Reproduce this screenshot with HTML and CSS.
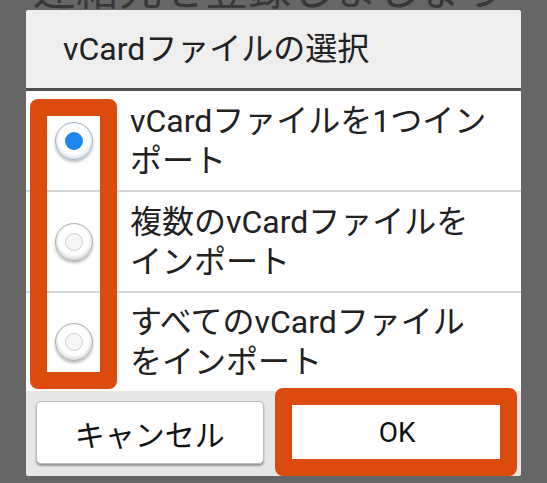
FILE: index.html
```html
<!DOCTYPE html>
<html lang="ja">
<head>
<meta charset="utf-8">
<title>vCardファイルの選択</title>
<link rel="stylesheet" href="styles.css">
</head>
<body>
<div class="screen">
  <div class="behind">連絡先を登録しましょう</div>
  <div class="dialog">
    <div class="title">vCardファイルの選択</div>
    <div class="list">
      <div class="row">
        <span class="radio checked"><span class="dot"></span></span>
        <span class="label">vCardファイルを1つイン<br>ポート</span>
      </div>
      <div class="row">
        <span class="radio"><span class="dot"></span></span>
        <span class="label">複数のvCardファイルを<br>インポート</span>
      </div>
      <div class="row">
        <span class="radio"><span class="dot"></span></span>
        <span class="label">すべてのvCardファイル<br>をインポート</span>
      </div>
    </div>
    <div class="buttons">
      <button class="btn btn-ja">キャンセル</button>
      <button class="btn">OK</button>
    </div>
  </div>
  <div class="mark mark-radios"></div>
  <div class="mark mark-ok"></div>
</div>
</body>
</html>
```
FILE: styles.css
```css
html, body {
  margin: 0;
  padding: 0;
}
body {
  background: #666666;
  font-family: Roboto, "Noto Sans CJK JP", sans-serif;
  color: #212121;
}
.screen {
  position: relative;
  width: 547px;
  height: 483px;
  overflow: hidden;
  padding-top: 10px;
  box-sizing: border-box;
}
.behind {
  position: absolute;
  left: 33px;
  top: -31px;
  font-size: 43px;
  line-height: 43px;
  color: #383838;
  white-space: nowrap;
}
.dialog {
  position: relative;
  margin-left: 26px;
  width: 495px;
  height: 466px;
  background: #ffffff;
  border-radius: 3px;
  overflow: hidden;
  display: flex;
  flex-direction: column;
}
.title {
  height: 78px;
  line-height: 78px;
  background: #eeeeee;
  padding-left: 37px;
  font-size: 32px;
  border-bottom: 3px solid #505050;
  flex: none;
}
.list {
  flex: none;
}
.row {
  height: 99px;
  display: flex;
  align-items: center;
  padding-left: 29px;
}
.row + .row {
  border-top: 2px solid #d6d6d6;
}
.row:last-child {
  height: 98px;
}
.label {
  font-size: 32px;
  line-height: 40px;
}
.radio {
  width: 38px;
  height: 38px;
  border-radius: 50%;
  margin-right: 37px;
  flex: none;
  box-sizing: border-box;
  background: radial-gradient(circle at 50% 45%, #ffffff 0, #ffffff 55%, #e0e0e0 70%, #c4c4c4 100%);
  border: 1px solid #b0b0b0;
  box-shadow: 0 2px 3px rgba(0,0,0,0.28);
  display: flex;
  align-items: center;
  justify-content: center;
}
.radio.checked {
  border-color: #a4b6c8;
  background: radial-gradient(circle at 50% 45%, #ffffff 0, #ffffff 55%, #e0e7ee 70%, #c2cedb 100%);
}
.dot {
  width: 18px;
  height: 18px;
  border-radius: 50%;
  box-sizing: border-box;
  background: #f6f6f6;
  border: 1px solid #d0d0d0;
}
.radio.checked .dot {
  background: #1a86ee;
  border: none;
}
.buttons {
  flex: 1;
  background: #e6e6e6;
  display: flex;
  gap: 20px;
  padding: 10px 10px 11px;
}
.btn {
  flex: 1;
  height: 63px;
  background: #ffffff;
  border: 1px solid #bcbcbc;
  border-radius: 5px;
  box-shadow: 0 2px 2px rgba(0,0,0,0.35);
  font-family: Roboto, "Noto Sans CJK JP", sans-serif;
  font-size: 28px;
  color: #111111;
  padding: 0;
}
.btn-ja {
  font-size: 30px;
}
.mark {
  position: absolute;
  border: 17px solid #dc4b0e;
  border-radius: 8px;
  box-sizing: border-box;
}
.mark-radios {
  left: 30px;
  top: 99px;
  width: 87px;
  height: 290px;
}
.mark-ok {
  left: 275px;
  top: 388px;
  width: 242px;
  height: 88px;
}
```
